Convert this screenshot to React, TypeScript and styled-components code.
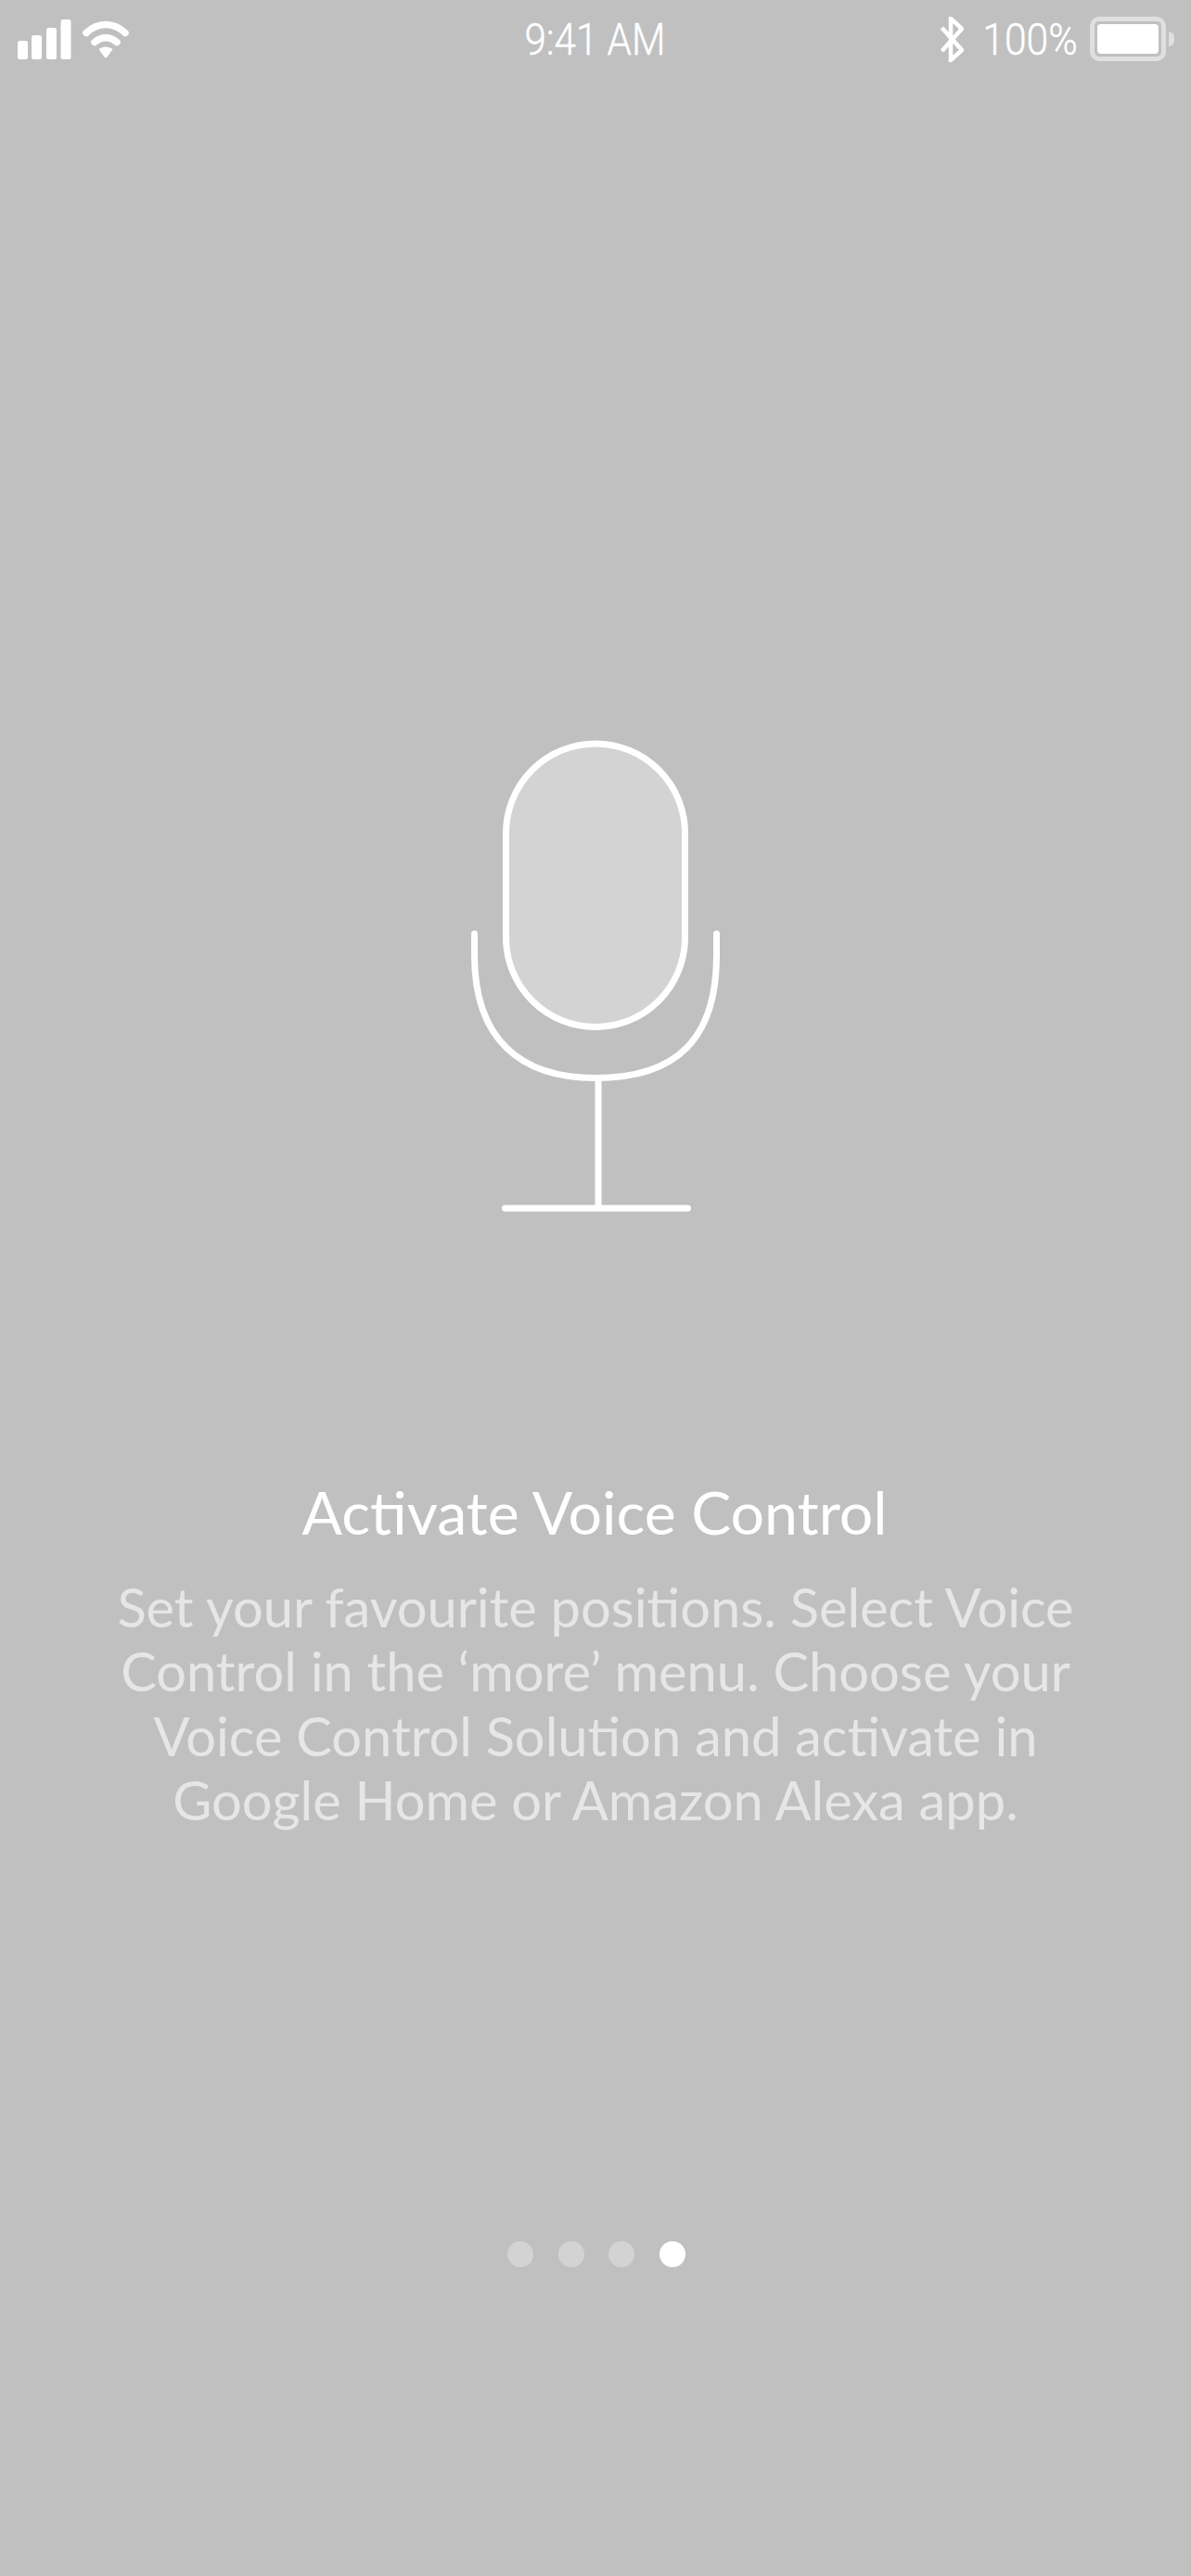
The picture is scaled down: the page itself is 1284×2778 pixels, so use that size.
import { FC } from 'react';
import styled, { createGlobalStyle } from 'styled-components';

const GlobalStyle = createGlobalStyle`
  html, body {
    margin: 0;
    padding: 0;
    background: #c0c0c0;
  }
`;

const SignalIcon: FC = () => (
  <svg width="58" height="43" viewBox="0 0 58 43" fill="#fff">
    <rect x="0" y="23" width="11" height="20" rx="2.5" />
    <rect x="15" y="17" width="11" height="26" rx="2.5" />
    <rect x="31" y="9" width="11" height="34" rx="2.5" />
    <rect x="46.5" y="0" width="11" height="43" rx="2.5" />
  </svg>
);

const WifiIcon: FC = () => (
  <svg width="50" height="44" viewBox="0 0 50 44" fill="none">
    <path d="M4 15.5C16.5 3.5 33.5 3.5 46 15.5" stroke="#fff" strokeWidth="7.5" strokeLinecap="round" />
    <path d="M13 25.5C20 19 30 19 37 25.5" stroke="#fff" strokeWidth="7.5" strokeLinecap="round" />
    <path d="M17.5 33C21.5 29.5 28.5 29.5 32.5 33L26.5 41.5C25.7 42.5 24.3 42.5 23.5 41.5Z" fill="#fff" />
  </svg>
);

const BluetoothIcon: FC = () => (
  <svg width="25" height="49" viewBox="0 0 25 49" fill="none">
    <path d="M1.5 12L23 36L11 47V2L23 13L1.5 37" stroke="#fff" strokeWidth="4.5" />
  </svg>
);

const MicIcon: FC = () => (
  <svg width="274" height="515" viewBox="0 0 274 515" fill="none" stroke="#fff" strokeWidth="7" strokeLinecap="round">
    <rect x="40.5" y="7" width="193" height="305.5" rx="96.5" fill="#d3d3d3" />
    <path d="M6.5 212V235C6.5 325 55 367.5 137 367.5C225 367.5 267.5 325 267.5 235V212" />
    <path d="M140 367.5V508" strokeLinecap="butt" />
    <path d="M39.5 508H236.5" />
  </svg>
);

export default function App() {
  return (
    <>
      <GlobalStyle />
      <Page>
        <StatusBar>
          <StatusLeft>
            <SignalIcon />
            <WifiIcon />
          </StatusLeft>
          <Clock>9:41 AM</Clock>
          <StatusRight>
            <BluetoothIcon />
            <Percent>100%</Percent>
            <Battery>
              <BatteryFill />
            </Battery>
            <BatteryNub />
          </StatusRight>
        </StatusBar>

        <Illustration>
          <MicIcon />
        </Illustration>

        <Title>Activate Voice Control</Title>
        <Body>
          Set your favourite positions. Select Voice
          <br />
          Control in the ‘more’ menu. Choose your
          <br />
          Voice Control Solution and activate in
          <br />
          Google Home or Amazon Alexa app.
        </Body>

        <Dots>
          <Dot />
          <Dot />
          <Dot />
          <Dot $active />
        </Dots>
      </Page>
    </>
  );
}

const Page = styled.div`
  display: flex;
  flex-direction: column;
  align-items: center;

  width: 1284px;
  height: 2778px;
  overflow: hidden;

  background: #c0c0c0;
`;

const StatusBar = styled.div`
  display: grid;
  grid-template-columns: 1fr auto 1fr;
  align-items: center;

  box-sizing: border-box;
  width: 100%;
  height: 84px;
  padding: 0 18px 0 19px;
`;

const StatusLeft = styled.div`
  display: flex;
  align-items: center;
  gap: 12px;
`;

const Clock = styled.div`
  margin-left: -2px;

  font-family: 'Roboto', 'Liberation Sans', sans-serif;
  font-size: 49px;
  font-weight: 300;
  color: #fff;
  -webkit-text-stroke: 0.5px #fff;

  transform: scaleX(0.86);
`;

const StatusRight = styled.div`
  display: flex;
  align-items: center;
  justify-content: flex-end;
`;

const Percent = styled.div`
  margin: 0 13px 0 5px;

  font-family: 'Roboto', 'Liberation Sans', sans-serif;
  font-size: 49px;
  font-weight: 300;
  color: #fff;
  -webkit-text-stroke: 0.5px #fff;

  transform: scaleX(0.87);
  transform-origin: right center;
`;

const Battery = styled.div`
  display: flex;

  box-sizing: border-box;
  width: 82px;
  height: 48px;
  padding: 3px;

  border: 5px solid #dfdfdf;
  border-radius: 10px;
`;

const BatteryFill = styled.div`
  flex: 1;

  background: #fff;
  border-radius: 4px;
`;

const BatteryNub = styled.div`
  width: 6px;
  height: 16px;
  margin-left: 3px;

  background: #dfdfdf;
  border-radius: 0 8px 8px 0;
`;

const Illustration = styled.div`
  display: flex;
  justify-content: center;

  margin-top: 711px;
  line-height: 0;
`;

const Title = styled.h1`
  margin: 281.500px 0 0 -2px;

  font-family: 'Lato', sans-serif;
  font-size: 64.4px;
  font-weight: 400;
  line-height: 76px;
  color: #fff;
`;

const Body = styled.p`
  margin: 30px 0 0;

  font-family: 'Lato', sans-serif;
  font-size: 57.8px;
  font-weight: 400;
  line-height: 69.5px;
  text-align: center;
  color: #e6e6e6;
`;

const Dots = styled.div`
  display: flex;
  gap: 26.5px;

  margin: 441px 0 0 2px;
`;

const Dot = styled.div<{ $active?: boolean }>`
  width: 28px;
  height: 28px;

  background: ${({ $active }) => ($active ? '#fff' : '#d3d3d3')};
  border-radius: 50%;
`;
